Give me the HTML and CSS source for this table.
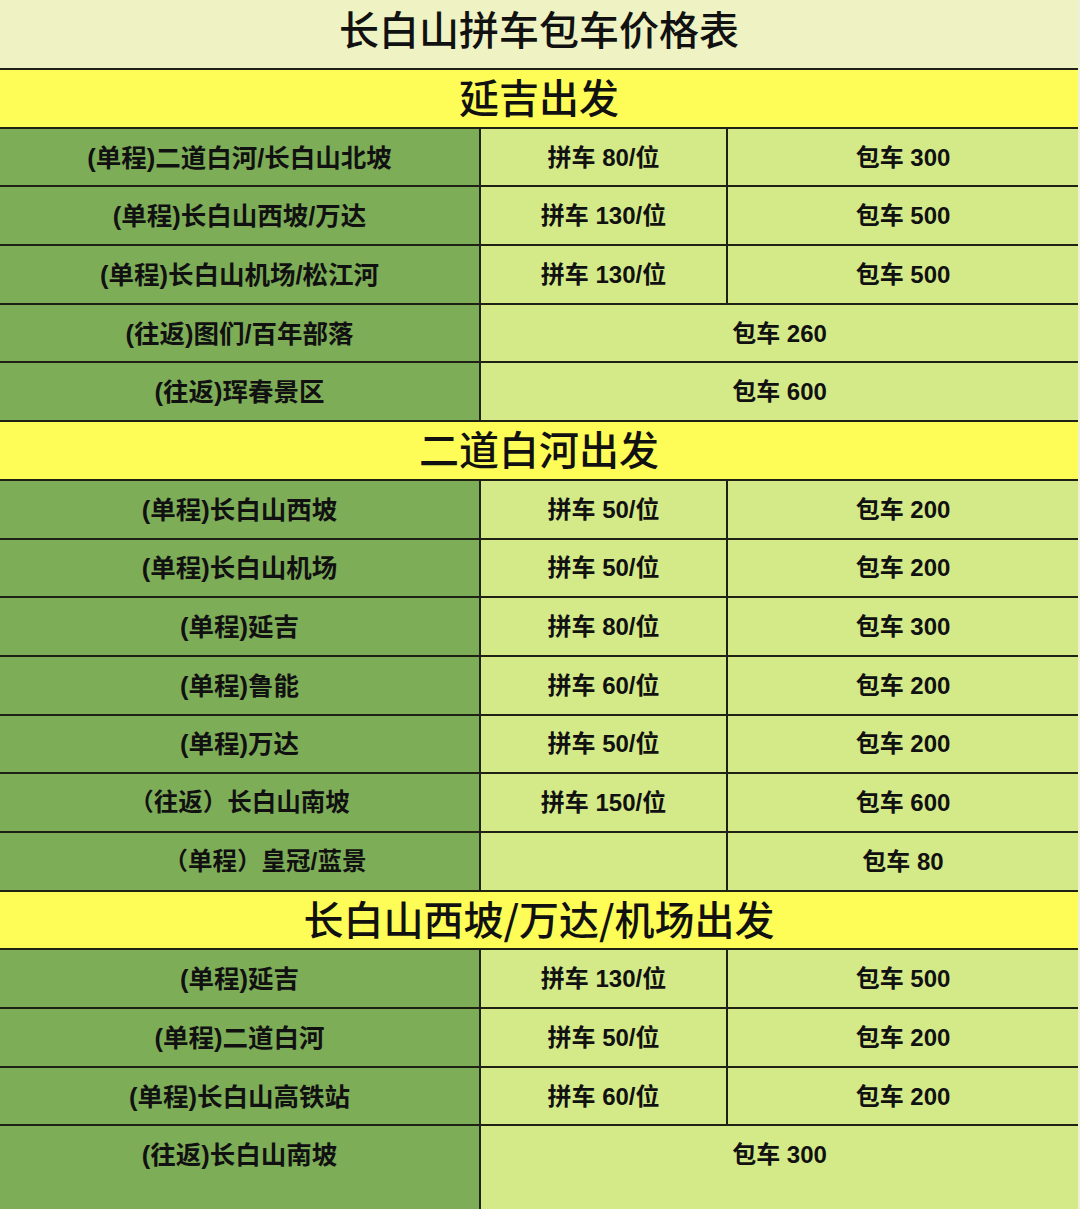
FILE: index.html
```html
<!DOCTYPE html>
<html lang="zh-CN">
<head>
<meta charset="utf-8">
<title>长白山拼车包车价格表</title>
<link rel="stylesheet" href="styles.css">
</head>
<body>
<div class="sheet">
  <div class="title">长白山拼车包车价格表</div>

  <div class="section">延吉出发</div>
  <div class="route">(单程)二道白河/长白山北坡</div><div class="price">拼车 80/位</div><div class="price">包车 300</div>
  <div class="route">(单程)长白山西坡/万达</div><div class="price">拼车 130/位</div><div class="price">包车 500</div>
  <div class="route">(单程)长白山机场/松江河</div><div class="price">拼车 130/位</div><div class="price">包车 500</div>
  <div class="route">(往返)图们/百年部落</div><div class="price wide">包车 260</div>
  <div class="route">(往返)珲春景区</div><div class="price wide">包车 600</div>

  <div class="section">二道白河出发</div>
  <div class="route">(单程)长白山西坡</div><div class="price">拼车 50/位</div><div class="price">包车 200</div>
  <div class="route">(单程)长白山机场</div><div class="price">拼车 50/位</div><div class="price">包车 200</div>
  <div class="route">(单程)延吉</div><div class="price">拼车 80/位</div><div class="price">包车 300</div>
  <div class="route">(单程)鲁能</div><div class="price">拼车 60/位</div><div class="price">包车 200</div>
  <div class="route">(单程)万达</div><div class="price">拼车 50/位</div><div class="price">包车 200</div>
  <div class="route fullwidth">（往返）长白山南坡</div><div class="price">拼车 150/位</div><div class="price">包车 600</div>
  <div class="route fullwidth indent">（单程）皇冠/蓝景</div><div class="price"></div><div class="price">包车 80</div>

  <div class="section">长白山西坡/万达/机场出发</div>
  <div class="route">(单程)延吉</div><div class="price">拼车 130/位</div><div class="price">包车 500</div>
  <div class="route">(单程)二道白河</div><div class="price">拼车 50/位</div><div class="price">包车 200</div>
  <div class="route">(单程)长白山高铁站</div><div class="price">拼车 60/位</div><div class="price">包车 200</div>
  <div class="route last">(往返)长白山南坡</div><div class="price wide last">包车 300</div>
</div>
</body>
</html>
```

FILE: styles.css
```css
html, body {
  margin: 0;
  padding: 0;
  background: #eef0dc;
}

.sheet {
  width: 1076px;
  padding-right: 2px;
  height: 1209px;
  overflow: hidden;
  display: grid;
  grid-template-columns: 479px 245px 350px;
  grid-template-rows: 68px repeat(18, 56.7px) 82.6px;
  column-gap: 2px;
  row-gap: 2px;
  background: #1f2114;
  font-family: "Liberation Sans", "Noto Sans CJK SC", sans-serif;
  color: #111;
}

.sheet > div {
  display: flex;
  align-items: center;
  justify-content: center;
  box-sizing: border-box;
  padding-bottom: 4px;
}

.title {
  grid-column: 1 / -1;
  background: #eff3c3;
  font-family: "Noto Sans CJK SC", sans-serif;
  font-size: 40px;
  font-weight: 500;
}

.sheet > .title {
  padding-bottom: 12px;
}

.section {
  grid-column: 1 / -1;
  background: #fefd58;
  font-family: "Noto Sans CJK SC", sans-serif;
  font-size: 40px;
  font-weight: 500;
}

.route {
  background: #7ead58;
  font-size: 25.5px;
  font-weight: 700;
}

.route.fullwidth {
  font-size: 24.5px;
}

.sheet > .indent {
  padding-left: 51px;
}

.price {
  background: #d4ea88;
  font-size: 24px;
  font-weight: 700;
}

.wide {
  grid-column: 2 / -1;
}

.sheet > .last {
  padding-bottom: 30px;
}
```
